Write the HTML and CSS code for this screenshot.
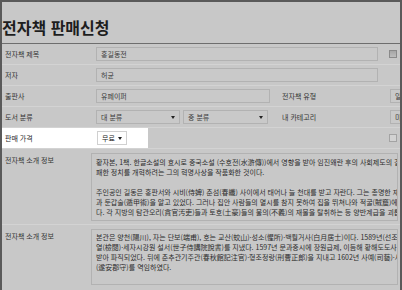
FILE: index.html
```
<!DOCTYPE html>
<html lang="ko">
<head>
<meta charset="utf-8">
<title>전자책 판매신청</title>
<link rel="stylesheet" href="styles.css">
</head>
<body>
<div class="frame">
  <div class="titlebar"><h1 class="title">전자책 판매신청</h1></div>

  <div class="row">
    <div class="label">전자책 제목</div>
    <div class="input w-long">홍길동전</div>
    <span class="check check-dark"></span>
  </div>

  <div class="row">
    <div class="label">저자</div>
    <div class="input w-long">허균</div>
  </div>

  <div class="row">
    <div class="label">출판사</div>
    <div class="input w-mid">유페이퍼</div>
    <div class="label2">전자책 유형</div>
    <div class="input w-side">일반</div>
  </div>

  <div class="row">
    <div class="label">도서 분류</div>
    <div class="select w-sel1"><span>대 분류</span><span class="arrow"></span></div>
    <div class="select w-sel2"><span>중 분류</span><span class="arrow"></span></div>
    <div class="label2 label2-tight">내 카테고리</div>
    <div class="input w-side">미분류</div>
  </div>

  <div class="row row-price">
    <div class="spot">
      <div class="label">판매 가격</div>
      <div class="select select-white"><span>무료</span><span class="arrow"></span></div>
    </div>
    <span class="check check-light"></span>
  </div>

  <div class="row row-tall row-intro1">
    <div class="label label-narrow">전자책 소개 정보</div>
    <div class="textarea ta1">
      <div class="line">황자본, 1책. 한글소설의 효시로 중국소설 (수호전(水滸傳))에서 영향을 받아 임진왜란 후의 사회제도의 결함, 특히 적서(嫡庶) 차별의 타파와 부</div>
      <div class="line">패한 정치를 개혁하려는 그의 혁명사상을 작품화한 것이다.</div>
      <div class="line">&nbsp;</div>
      <div class="line">주인공인 길동은 홍판서와 시비(侍婢) 춘섬(春纖) 사이에서 태어나 늘 천대를 받고 자란다. 그는 총명한 재주로 도술(道術)</div>
      <div class="line">과 둔갑술(遁甲術)을 알고 있었다. 그러나 집안 사람들의 멸시를 참지 못하여 집을 뛰쳐나와 적굴(賊窟)에 들어가 두목이 된</div>
      <div class="line">다. 각 지방의 탐관오리(貪官汚吏)들과 토호(土豪)들의 불의(不義)의 재물을 탈취하는 등 양반계급을 괴롭히다가</div>
    </div>
  </div>

  <div class="row row-tall row-intro2">
    <div class="label label-narrow">전자책 소개 정보</div>
    <div class="textarea ta2">
      <div class="line">본관은 양천(陽川), 자는 단보(端甫), 호는 교산(蛟山)·성소(惺所)·백월거사(白月居士)이다. 1589년(선조 22) 생원시에 합격</div>
      <div class="line">열(檢閱)·세자시강원 설서(世子侍講院說書)를 지냈다. 1597년 문과중시에 장원급제, 이듬해 황해도도사가 되었으나</div>
      <div class="line">받아 파직되었다. 뒤에 춘추관기주관(春秋館記注官)·형조정랑(刑曹正郎)을 지내고 1602년 사예(司藝)·사복시정(司僕寺正)</div>
      <div class="line">(遂安郡守)를 역임하였다.</div>
    </div>
  </div>
</div>
</body>
</html>
```

FILE: styles.css
```
html, body {
  margin: 0;
  padding: 0;
  height: 290px;
  overflow: hidden;
  background: #c8c8c8;
}

body {
  font-family: "Noto Sans CJK KR", "Noto Sans", sans-serif;
  color: #333;
}

.frame {
  box-sizing: border-box;
  width: 402px;
  height: 300px;
  border: 2px solid #5a5a5a;
  border-bottom: none;
  background: #c8c8c8;
  overflow: hidden;
}

.titlebar {
  height: 25px;
  padding: 14px 0 2px 0;
  border-bottom: 1px solid #6e6e6e;
}

.title {
  margin: 0;
  padding-left: 0;
  font-size: 16px;
  line-height: 23px;
  font-weight: 700;
  color: #1e1e1e;
  white-space: nowrap;
}

.row {
  box-sizing: border-box;
  display: flex;
  align-items: center;
  height: 21px;
  border-bottom: 1px solid #d3d3d3;
  font-size: 7px;
  line-height: 12px;
}

.label {
  box-sizing: border-box;
  flex: 0 0 auto;
  width: 94px;
  padding-left: 3px;
  color: #333;
  white-space: nowrap;
}

.label-narrow {
  width: 89px;
}

.label2 {
  box-sizing: border-box;
  flex: 0 0 auto;
  width: 108px;
  margin-left: 12px;
  color: #333;
  white-space: nowrap;
}

.label2-tight {
  margin-left: 14px;
}

.input,
.select {
  box-sizing: border-box;
  flex: 0 0 auto;
  height: 14px;
  border: 1px solid #b2b2b2;
  background: #c9c9c9;
  padding: 0 4px;
  color: #3a3a3a;
  white-space: nowrap;
  overflow: hidden;
}

.w-long { width: 282px; }
.w-mid { width: 174px; }
.w-side { width: 100px; }
.w-sel1 { width: 84px; }
.w-sel2 { width: 85px; margin-left: 3px; }

.select {
  display: flex;
  align-items: center;
  justify-content: space-between;
}

.arrow {
  width: 0;
  height: 0;
  border-top: 3px solid #222;
  border-left: 2.5px solid transparent;
  border-right: 2.5px solid transparent;
}

.check {
  flex: 0 0 auto;
  box-sizing: border-box;
  width: 8px;
  height: 8px;
}

.check-dark {
  margin-left: 11px;
  border: 1px solid #8a8a8a;
  background: linear-gradient(#a6a6a6, #bdbdbd);
}

.check-light {
  margin-left: 241px;
  border: 1px solid #a3a3a3;
  background: #d2d2d2;
}

.spot {
  display: flex;
  align-items: center;
  align-self: stretch;
  width: 146px;
  background: #ffffff;
}

.spot .label {
  width: 95px;
  color: #2a2a2a;
}

.select-white {
  width: 30px;
  background: #ffffff;
  border-color: #d0d0d0;
  color: #222;
}

.row-tall {
  align-items: flex-start;
  height: auto;
}

.row-intro1 {
  height: 76px;
  padding-top: 4px;
}

.row-intro1 .label {
  padding-top: 1px;
}

.row-intro2 {
  height: 70px;
  padding-top: 4px;
  border-bottom: none;
}

.row-intro2 .label {
  padding-top: 1px;
}

.textarea {
  box-sizing: border-box;
  flex: 0 0 auto;
  width: 307px;
  border: 1px solid #b2b2b2;
  background: #c8c8c8;
  padding: 3px 4px;
  color: #2c2c2c;
  overflow: hidden;
}

.ta1 {
  height: 68px;
  line-height: 10px;
}

.ta2 {
  height: 56px;
  line-height: 10px;
  padding-top: 2px;
}

.line {
  white-space: nowrap;
}
```
